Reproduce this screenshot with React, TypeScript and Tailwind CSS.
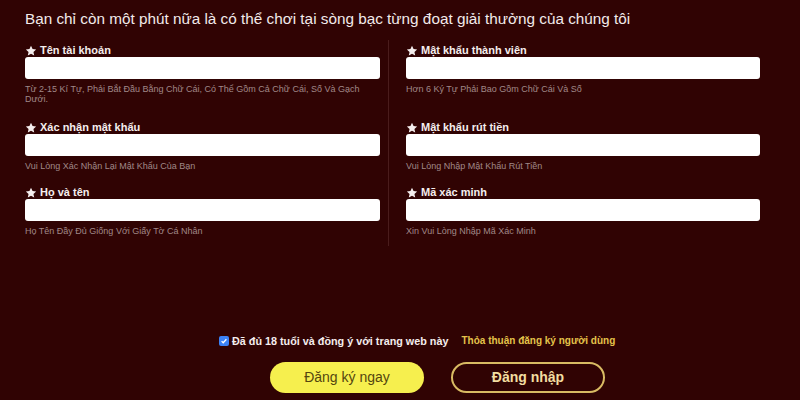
import React from "react";

const Star = () => (
  <svg viewBox="0 0 24 24" className="w-[12px] h-[12px] shrink-0" fill="#f4eded">
    <path d="M12 1.5l3.1 6.6 7.2.8-5.4 4.9 1.5 7.1L12 17.3l-6.4 3.6 1.5-7.1-5.4-4.9 7.2-.8z" />
  </svg>
);

type FieldProps = { label: string; hint: string; h: string };

const Field = ({ label, hint, h }: FieldProps) => (
  <div className={`flex flex-col ${h}`}>
    <div className="flex items-center gap-[3px] h-[13px]">
      <Star />
      <span className="text-[11px] leading-[13px] font-bold text-[#f4eded]">{label}</span>
    </div>
    <div className="h-[22px] bg-white rounded-[3px]" />
    <div className="mt-[5px] text-[9px] leading-[10px] text-[#a08888] pr-[2px]">{hint}</div>
  </div>
);

export default function App() {
  return (
    <div
      className="w-[800px] h-[400px] bg-[#300303] overflow-hidden flex flex-col"
      style={{ fontFamily: '"Liberation Sans", Arial, sans-serif' }}
    >
      <div className="pl-[25px] pt-[9px] h-[40px] text-[15.3px] leading-[20px] text-[#f2eaea]">
        Bạn chỉ còn một phút nữa là có thể chơi tại sòng bạc từng đoạt giải thưởng của chúng tôi
      </div>
      <div className="flex pl-[25px] h-[206px]">
        <div className="w-[355px] pt-[4px] flex flex-col">
          <Field
            h="h-[77px]"
            label="Tên tài khoản"
            hint="Từ 2-15 Kí Tự, Phải Bắt Đầu Bằng Chữ Cái, Có Thể Gồm Cả Chữ Cái, Số Và Gạch Dưới."
          />
          <Field h="h-[65px]" label="Xác nhận mật khẩu" hint="Vui Lòng Xác Nhận Lại Mật Khẩu Của Bạn" />
          <Field h="h-[60px]" label="Họ và tên" hint="Họ Tên Đầy Đủ Giống Với Giấy Tờ Cá Nhân" />
        </div>
        <div className="ml-[8px] w-px bg-[#4a1c1c]" />
        <div className="ml-[17px] w-[354px] pt-[4px] flex flex-col">
          <Field h="h-[77px]" label="Mật khẩu thành viên" hint="Hơn 6 Ký Tự Phải Bao Gồm Chữ Cái Và Số" />
          <Field h="h-[65px]" label="Mật khẩu rút tiền" hint="Vui Lòng Nhập Mật Khẩu Rút Tiền" />
          <Field h="h-[60px]" label="Mã xác minh" hint="Xin Vui Lòng Nhập Mã Xác Minh" />
        </div>
      </div>
      <div className="mt-[89px] pl-[219px] flex items-center h-[12px]">
        <div className="w-[10px] h-[10px] rounded-[2px] bg-[#3b82f6] flex items-center justify-center">
          <svg viewBox="0 0 10 10" className="w-[8px] h-[8px]" fill="none" stroke="white" strokeWidth="1.6">
            <path d="M2 5.2l2 2 4-4.4" />
          </svg>
        </div>
        <span className="ml-[3px] text-[10.8px] leading-[12px] font-bold text-[#f4eded]">
          Đã đủ 18 tuổi và đồng ý với trang web này
        </span>
        <span className="ml-[13px] text-[10px] leading-[12px] font-bold text-[#e3c24a]">
          Thỏa thuận đăng ký người dùng
        </span>
      </div>
      <div className="mt-[15px] pl-[270px] flex gap-[27px]">
        <button className="w-[154px] h-[31px] rounded-full bg-[#f6ef4e] text-[#54460f] text-[14px] leading-[31px]">
          Đăng ký ngay
        </button>
        <button className="w-[154px] h-[31px] rounded-full border-2 border-[#d9bb63] text-[#f3dda0] text-[14px] font-semibold">
          Đăng nhập
        </button>
      </div>
    </div>
  );
}
